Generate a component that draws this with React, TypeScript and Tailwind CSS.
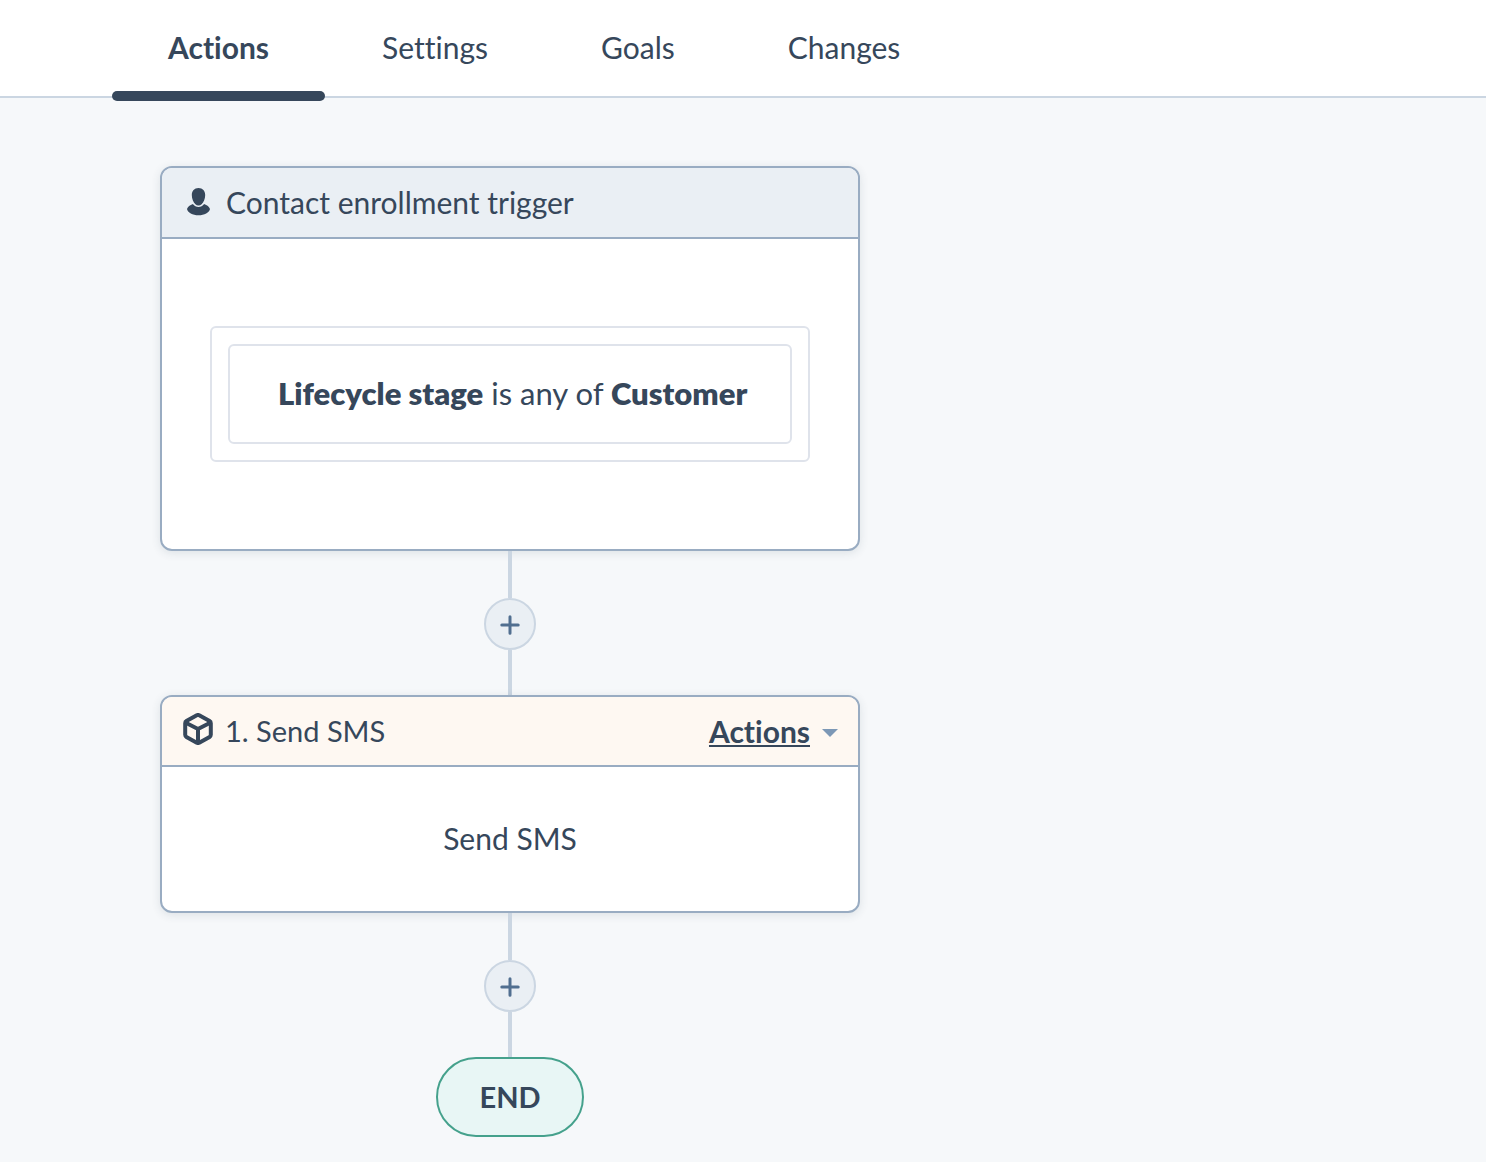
import type { ReactNode } from "react";

const tabs = ["Actions", "Settings", "Goals", "Changes"];

function ContactIcon() {
  return (
    <svg viewBox="0 0 24 28" className="h-7 w-6" fill="currentColor" aria-hidden="true">
      <path d="M12.500 0C8.300 0 5.800 2.900 5.800 6.900c0 3.900 1.500 7.300 3.600 9.300 1.800 1.700 4.400 1.700 6.200 0 2.100-2 3.600-5.400 3.600-9.300C19.200 2.900 16.700 0 12.500 0Z" />
      <path d="M6.900 16.100C3.900 17.300 1.700 18.900 1 21c.6 3.600 5.700 6.300 11.500 6.300S23.400 24.600 24 21c-.7-2.100-2.900-3.700-5.900-4.900-1.400 1.900-3.400 2.900-5.600 2.900s-4.200-1-5.600-2.900Z" />
    </svg>
  );
}

function CubeIcon() {
  return (
    <svg
      viewBox="0 0 30 32"
      className="mb-1 h-8 w-[30px]"
      fill="none"
      stroke="currentColor"
      strokeWidth="4"
      strokeLinejoin="round"
      aria-hidden="true"
    >
      <path d="M13.800 2.300a2.500 2.500 0 0 1 2.400 0L26.600 8.100a2.400 2.400 0 0 1 1.200 2.100v11.600a2.400 2.400 0 0 1-1.200 2.100L16.200 29.700a2.500 2.500 0 0 1-2.400 0L3.400 23.900a2.400 2.400 0 0 1-1.200-2.100V10.200a2.400 2.400 0 0 1 1.200-2.100Z" />
      <path d="M2.800 9.800 15 16l12.200-6.200M15 16v13" />
    </svg>
  );
}

function AddStep() {
  return (
    <div className="flex flex-col items-center">
      <div className="h-[47px] w-1 bg-[#cbd6e2]" />
      <button
        type="button"
        aria-label="Add action"
        className="flex size-[52px] items-center justify-center rounded-full border-2 border-[#cbd6e2] bg-[#eaeff4] text-[#516f90]"
      >
        <svg
          viewBox="0 0 20 20"
          className="mt-0.5 size-5"
          stroke="currentColor"
          strokeWidth="3"
          strokeLinecap="round"
          aria-hidden="true"
        >
          <path d="M10 1.800v16.400M1.800 10h16.400" />
        </svg>
      </button>
      <div className="h-[45px] w-1 bg-[#cbd6e2]" />
    </div>
  );
}

function Card({ header, children }: { header: ReactNode; children: ReactNode }) {
  return (
    <section className="w-full overflow-hidden rounded-xl border-2 border-[#99acc2] bg-white shadow-[0_2px_10px_rgba(45,62,80,0.12)]">
      {header}
      {children}
    </section>
  );
}

export default function App() {
  return (
    <div className="min-h-screen bg-[#f6f8fa] font-['Lato',sans-serif] text-[30px] leading-9 text-[#36475b] [font-variant-ligatures:none]">
      <nav className="flex gap-px border-b-2 border-[#cbd6e2] bg-white px-28">
        {tabs.map((tab, i) => (
          <a
            key={tab}
            href={`#${tab.toLowerCase()}`}
            aria-current={i === 0 ? "page" : undefined}
            className="relative px-14 pt-[29px] pb-[31px] aria-[current=page]:font-bold"
          >
            {tab}
            {i === 0 && (
              <span className="absolute inset-x-0 -bottom-[5px] h-2.5 rounded-full bg-[#36475b]" />
            )}
          </a>
        ))}
      </nav>

      <main className="px-40 pt-[68px] pb-6">
        <div className="flex max-w-[700px] flex-col items-center">
          <Card
            header={
              <header className="flex items-center gap-4 border-b-2 border-[#99acc2] bg-[#eaeff4] pt-4 pr-5 pb-[17px] pl-6">
                <ContactIcon />
                <h2>Contact enrollment trigger</h2>
              </header>
            }
          >
            <div className="px-12 py-[87px]">
              <div className="rounded-md border-2 border-[#dfe3eb] p-4">
                <p className="rounded-md border-2 border-[#dfe3eb] pt-[29px] pr-8 pb-[31px] pl-12 text-[31px] leading-9">
                  <strong className="font-extrabold">Lifecycle stage</strong> is any of{" "}
                  <strong className="font-extrabold">Customer</strong>
                </p>
              </div>
            </div>
          </Card>

          <AddStep />

          <Card
            header={
              <header className="flex items-center gap-3 border-b-2 border-[#99acc2] bg-[#fef8f2] py-4 pr-5 pl-[21px]">
                <CubeIcon />
                <h2 className="text-[29px] leading-9">1. Send SMS</h2>
                <button type="button" className="ml-auto flex items-center gap-3 font-bold">
                  <span className="underline decoration-2 underline-offset-2">Actions</span>
                  <svg viewBox="0 0 16 8" className="mt-1 h-2 w-4" fill="#7c98b6" aria-hidden="true">
                    <path d="M0 0h16L8 8Z" />
                  </svg>
                </button>
              </header>
            }
          >
            <p className="pt-[53px] pb-[55px] text-center">Send SMS</p>
          </Card>

          <AddStep />

          <div className="rounded-full border-2 border-[#45a18c] bg-[#e8f6f5] px-[41px] py-5 text-[29px] leading-9 font-bold">
            END
          </div>
        </div>
      </main>
    </div>
  );
}
